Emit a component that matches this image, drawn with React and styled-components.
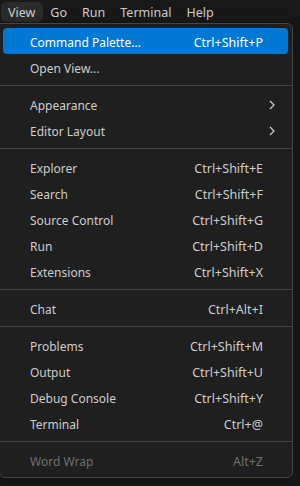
import React from 'react';
import styled, { createGlobalStyle } from 'styled-components';

const GlobalStyle = createGlobalStyle`
  html, body {
    margin: 0;
    padding: 0;
    background: #181818;
  }
  body {
    width: 300px;
    height: 486px;
    overflow: hidden;
    font-family: "Noto Sans", "Liberation Sans", sans-serif;
    font-size: 12px;
    -webkit-font-smoothing: antialiased;
  }
`;

const Page = styled.div`
  width: 300px;
  height: 486px;
  background: #181818;
  display: flex;
  flex-direction: column;
`;

const MenuBar = styled.div`
  display: flex;
  align-items: center;
  height: 24px;
  padding: 0 0 0 1px;
`;

const BarItem = styled.div`
  display: flex;
  align-items: center;
  box-sizing: border-box;
  height: 20px;
  padding: 1px 8px 0 7px;
  border-radius: 5px;
  color: #cccccc;
  font-size: 12.5px;
  background: ${(p) => (p.$open ? '#2b2b2b' : 'transparent')};
`;

const Menu = styled.div`
  width: 294px;
  margin-top: -1px;
  margin-left: -1px;
  box-sizing: border-box;
  background: #1f1f1f;
  border: 1px solid #454545;
  border-radius: 0 6px 6px 6px;
  padding: 4px 0;
  box-shadow: 0 2px 8px rgba(0, 0, 0, 0.36);
`;

const Item = styled.div`
  display: flex;
  align-items: center;
  box-sizing: border-box;
  height: 26px;
  margin: 0 4px 0 3px;
  padding: 2px 25px 0 27px;
  border-radius: 4px;
  font-size: 12px;
  color: ${(p) => (p.$disabled ? '#6e6e6e' : p.$active ? '#ffffff' : '#cccccc')};
  background: ${(p) => (p.$active ? '#0078d4' : 'transparent')};
`;

const Label = styled.span`
  flex: 1;
  white-space: nowrap;
`;

const Shortcut = styled.span`
  white-space: nowrap;
  font-size: 12.5px;
  color: inherit;
`;

const Chevron = styled.svg`
  width: 8px;
  height: 10px;
  margin-right: -13px;
  color: #cccccc;
`;

const Separator = styled.div`
  height: 1px;
  margin: 5px 0;
  background: #454545;
`;

const groups = [
  [
    { label: 'Command Palette...', keys: 'Ctrl+Shift+P', active: true },
    { label: 'Open View...' },
  ],
  [
    { label: 'Appearance', sub: true },
    { label: 'Editor Layout', sub: true },
  ],
  [
    { label: 'Explorer', keys: 'Ctrl+Shift+E' },
    { label: 'Search', keys: 'Ctrl+Shift+F' },
    { label: 'Source Control', keys: 'Ctrl+Shift+G' },
    { label: 'Run', keys: 'Ctrl+Shift+D' },
    { label: 'Extensions', keys: 'Ctrl+Shift+X' },
  ],
  [{ label: 'Chat', keys: 'Ctrl+Alt+I' }],
  [
    { label: 'Problems', keys: 'Ctrl+Shift+M' },
    { label: 'Output', keys: 'Ctrl+Shift+U' },
    { label: 'Debug Console', keys: 'Ctrl+Shift+Y' },
    { label: 'Terminal', keys: 'Ctrl+@' },
  ],
  [{ label: 'Word Wrap', keys: 'Alt+Z', disabled: true }],
];

const ChevronIcon = () => (
  <Chevron viewBox="0 0 8 10">
    <path d="M2 1l4 4-4 4" fill="none" stroke="currentColor" strokeWidth="1.2" />
  </Chevron>
);

export default function App() {
  return (
    <Page>
      <GlobalStyle />
      <MenuBar>
        <BarItem $open>View</BarItem>
        <BarItem>Go</BarItem>
        <BarItem>Run</BarItem>
        <BarItem>Terminal</BarItem>
        <BarItem>Help</BarItem>
      </MenuBar>
      <Menu>
        {groups.map((group, gi) => (
          <React.Fragment key={gi}>
            {gi > 0 && <Separator />}
            {group.map((it) => (
              <Item key={it.label} $active={it.active} $disabled={it.disabled}>
                <Label>{it.label}</Label>
                {it.keys && <Shortcut>{it.keys}</Shortcut>}
                {it.sub && <ChevronIcon />}
              </Item>
            ))}
          </React.Fragment>
        ))}
      </Menu>
    </Page>
  );
}
